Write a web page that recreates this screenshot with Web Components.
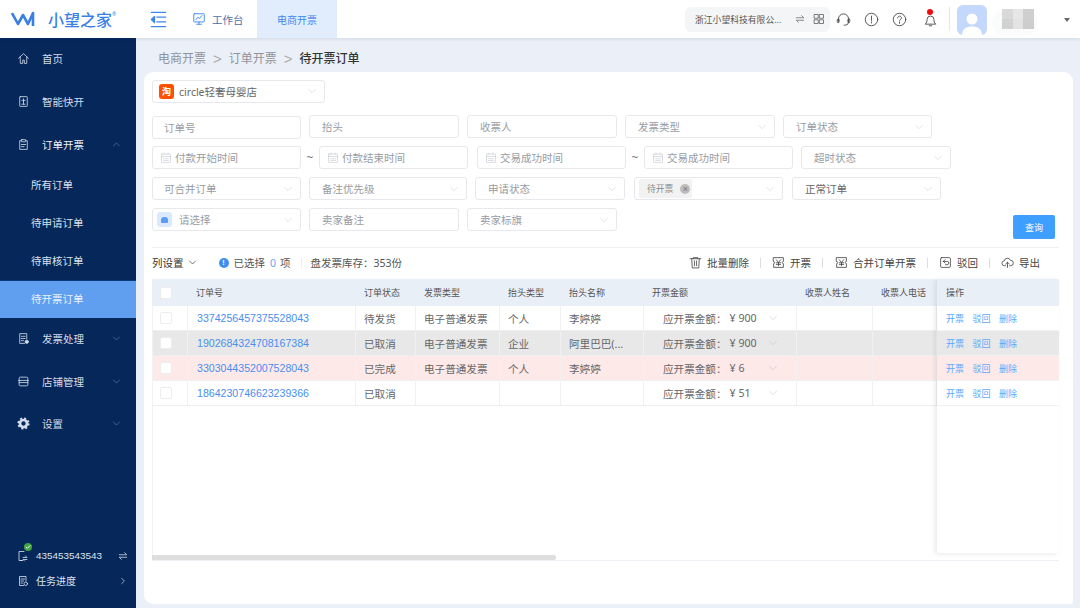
<!DOCTYPE html>
<html lang="zh">
<head>
<meta charset="utf-8">
<title>待开票订单</title>
<style>
  html, body { margin: 0; height: 100%; overflow: hidden; background: #ebeff7; }
  body { font-family: "Noto Sans", "Noto Sans CJK SC", sans-serif; color: #666; }
</style>
</head>
<body>
<app-shell>
  <top-bar slot="top"></top-bar>
  <side-nav slot="side">
    <nav-item icon="home">首页</nav-item>
    <nav-item icon="flash">智能快开</nav-item>
    <nav-item icon="clip" chevron="up" strong>订单开票</nav-item>
    <nav-item sub first>所有订单</nav-item>
    <nav-item sub>待申请订单</nav-item>
    <nav-item sub>待审核订单</nav-item>
    <nav-item sub active>待开票订单</nav-item>
    <nav-item icon="receipt" chevron="down">发票处理</nav-item>
    <nav-item icon="store" chevron="down">店铺管理</nav-item>
    <nav-item icon="gear" chevron="down" style="margin-top:-1px">设置</nav-item>
    <nav-footer slot="footer"></nav-footer>
  </side-nav>
  <bread-crumb slot="main"></bread-crumb>
  <order-page slot="main"></order-page>
</app-shell>

<script>
const ICONS = {
  home: '<path d="M3 11.5 12 3l9 8.5M6 9v12h4.5v-6h3v6H18V9"/>',
  flash: '<rect x="5" y="3" width="14" height="18" rx="1"/><path d="M12 7v6M9 10h6M9 17h6M12 13v4"/>',
  clip: '<path d="M8 5H5v16h14V5h-3"/><rect x="8" y="3" width="8" height="4" rx="1"/><path d="M8 12h8M8 16h5"/>',
  receipt: '<path d="M18 13V3H5v18h9"/><path d="M8 8h7M8 12h7M8 16h4"/><circle cx="18" cy="18" r="3" fill="currentColor"/>',
  store: '<path d="M4 10V6a2 2 0 0 1 2-2h12a2 2 0 0 1 2 2v4M3 10h18M4 10v8a2 2 0 0 0 2 2h12a2 2 0 0 0 2-2v-8M4 14h16"/>',
  gear: '<circle cx="12" cy="12" r="6.5" stroke-width="5"/><circle cx="12" cy="12" r="9.5" stroke-width="3.5" stroke-dasharray="3.7 3.76" stroke-linecap="butt"/>',
  down: '<path d="m4 8 8 8 8-8"/>',
  up: '<path d="m4 16 8-8 8 8"/>',
  right: '<path d="m8 4 8 8-8 8"/>',
  swap: '<path d="M3 9h18l-5-5M21 15H3l5 5"/>',
  grid: '<rect x="3" y="3" width="7.5" height="7.5"/><rect x="13.5" y="3" width="7.5" height="7.5"/><rect x="3" y="13.5" width="7.5" height="7.5"/><rect x="13.5" y="13.5" width="7.5" height="7.5"/>',
  headset: '<path d="M4 15v-4a8 8 0 0 1 16 0v5a5 5 0 0 1-5 5h-2"/><rect x="2" y="11" width="3" height="6" rx="1.5"/><rect x="19" y="11" width="3" height="6" rx="1.5"/>',
  alert: '<circle cx="12" cy="12" r="10"/><path d="M12 6.5v7M12 16v1.5"/>',
  help: '<circle cx="12" cy="12" r="10"/><path d="M9 9.5a3 3 0 1 1 4.5 2.6c-1 .6-1.5 1.2-1.5 2.4M12 16.5V18"/>',
  bell: '<path d="M4 19c2-2 2.5-3.5 2.5-7a5.500 5.500 0 0 1 11 0c0 3.500.5 5 2.500 7ZM10 22h4"/>',
  menu: '<path d="M3 3h18M10 9h11M10 15h11M3 21h18"/><path d="M7 8v8l-4-4Z" fill="currentColor"/>',
  screen: '<rect x="3" y="3" width="18" height="14" rx="1"/><path d="m7 13 3-4 3 2 4-5M12 17v4M8 21h8"/>',
  calendar: '<rect x="3" y="4" width="18" height="17" rx="1"/><path d="M3 9h18M7 13.5h10M7 17h10M8 2v3M16 2v3"/>',
  trash: '<path d="M2 5h20M8 5V3h8v2M5 5l1 17h12l1-17M10 9v9M14 9v9"/>',
  yen: '<path d="M3 3h18v7a2 2 0 0 0 0 4v7H3v-7a2 2 0 0 0 0-4ZM8 7l4 5 4-5M12 12v6M8 12.5h8M8 15.5h8"/>',
  back: '<rect x="3" y="3" width="18" height="18" rx="2"/><path d="M8 10h7a3 3 0 0 1 0 6h-3M8 10l3-3M8 10l3 3"/>',
  cloud: '<path d="M8 18H6.5a4.500 4.500 0 0 1-.5-9 6 6 0 0 1 11.500-1A5 5 0 0 1 18 18h-2M12 21v-9M8.5 15l3.5-3.5 3.5 3.500"/>',
  device: '<path d="M14 3H4v18h6M8 21h3"/><path d="M12 15h8l-3-3M20 19h-8l3 3"/>',
  task: '<path d="M18 12V3H5v18h8"/><path d="M8 8h7M8 12h5M8 16h3"/><circle cx="17.5" cy="17.5" r="3.5"/>'
};

function icon(name, size, weight) {
  return `<svg width="${size}" height="${size}" viewBox="0 0 24 24" fill="none" stroke="currentColor" stroke-width="${weight || 1.6}" stroke-linecap="round" stroke-linejoin="round" style="display:block;flex:none">${ICONS[name]}</svg>`;
}

class AppShell extends HTMLElement {
  constructor() {
    super();
    this.attachShadow({ mode: "open" }).innerHTML = `
      <style>
        :host { display: flex; flex-direction: column; height: 608px; width: 1080px; overflow: hidden; }
        .row { flex: 1; display: flex; min-height: 0; }
        .main { flex: 1; min-width: 0; display: flex; flex-direction: column; padding: 0 7px 4px 8px; }
      </style>
      <slot name="top"></slot>
      <div class="row">
        <slot name="side"></slot>
        <div class="main"><slot name="main"></slot></div>
      </div>`;
  }
}

class TopBar extends HTMLElement {
  constructor() {
    super();
    this.attachShadow({ mode: "open" }).innerHTML = `
      <style>
        :host { display: flex; align-items: center; height: 38px; background: #fff; box-shadow: 0 1px 3px rgba(20,40,90,.12); position: relative; z-index: 2; }
        .logo { display: flex; align-items: center; width: 149px; color: #3b7fe6; flex: none; }
        .logo svg { margin-left: 11px; }
        .logo b { font: 500 16px "Noto Sans CJK SC", sans-serif; margin-left: 13px; }
        .logo sup { font-size: 5px; line-height: 0; margin-top: -10px; }
        .menu { color: #3f86ee; width: 43px; flex: none; }
        .tab { display: flex; align-items: center; height: 38px; font-size: 10.5px; gap: 6px; }
        .work { width: 65px; color: #4a6fa5; flex: none; }
        .work svg { color: #3f86ee; }
        .on { width: 80px; justify-content: center; background: #e1edfd; color: #3f86ee; font-size: 10px; flex: none; }
        .gap { flex: 1; }
        .org { display: flex; align-items: center; width: 145px; height: 25px; box-sizing: border-box; padding-left: 10px; background: #f4f5f6; border-radius: 6px; font-size: 8.8px; color: #555; }
        .org span { width: 100px; white-space: nowrap; }
        .org svg:last-child { margin-left: 8px; }
        .ic { color: #444; display: flex; align-items: center; margin-left: 13px; }
        .bell { position: relative; margin-left: 16px; color: #444; }
        .dot { position: absolute; left: 4px; top: -3px; width: 6px; height: 6px; border-radius: 50%; background: #f00c0c; }
        .div { width: 1px; height: 24px; background: #e6e6e6; margin: 0 7px 0 11px; }
        .avatar { width: 30px; height: 30px; margin-top: 1px; border-radius: 6px; background: #c3d8fc; display: flex; align-items: flex-end; justify-content: center; overflow: hidden; }
        .who { position: relative; width: 59px; height: 20px; margin-left: 15px; display: grid; grid-template-columns: repeat(3, 10.5px); grid-template-rows: repeat(2, 10px); }
        .who::before { content: ""; position: absolute; left: -10px; top: 2px; width: 46px; height: 24px; border-radius: 12px; background: #fafbfb; }
        .who i { display: block; position: relative; }
        .caret { width: 0; height: 0; border: 3px solid transparent; border-top: 4px solid #666; margin: 4px 10px 0 3px; }
      </style>
      <div class="logo">
        <svg width="24" height="16" viewBox="0 0 24 16" fill="none" stroke="currentColor" stroke-width="2.6" stroke-linejoin="round"><path d="M1 2l6 11 5-9 5 9 5-11v13"/></svg>
        <b>小望之家</b><sup>®</sup>
      </div>
      <div class="menu">${icon("menu", 19)}</div>
      <div class="tab work">${icon("screen", 14)}<span>工作台</span></div>
      <div class="tab on">电商开票</div>
      <div class="gap"></div>
      <div class="org"><span>浙江小望科技有限公...</span>${icon("swap", 10)}${icon("grid", 12, 1.5)}</div>
      <div class="ic" style="margin-left:6px">${icon("headset", 15, 1.4)}</div>
      <div class="ic">${icon("alert", 15, 1.4)}</div>
      <div class="ic">${icon("help", 15, 1.4)}</div>
      <div class="bell">${icon("bell", 15, 1.4)}<span class="dot"></span></div>
      <div class="div"></div>
      <div class="avatar"><svg width="24" height="25" viewBox="0 0 24 25" fill="#fff"><circle cx="12" cy="9" r="5.5"/><path d="M2 25c0-6 4.500-8.500 10-8.500S22 19 22 25Z"/></svg></div>
      <div class="who">
        <i style="background:#d9d9d9"></i><i style="background:#e6e6e6"></i><i style="background:#cfcfcf"></i>
        <i style="background:#d2d2d2"></i><i style="background:#e3e3e3"></i><i style="background:#cdcdcd"></i>
      </div>
      <div class="caret"></div>`;
  }
}

class SideNav extends HTMLElement {
  constructor() {
    super();
    this.attachShadow({ mode: "open" }).innerHTML = `
      <style>
        :host { display: flex; flex-direction: column; width: 136px; flex: none; background: #06275a; }
        .list { flex: 1; }
      </style>
      <div class="list"><slot></slot></div>
      <slot name="footer"></slot>`;
  }
}

class NavItem extends HTMLElement {
  constructor() {
    super();
    const sub = this.hasAttribute("sub");
    const name = this.getAttribute("icon");
    const chev = this.getAttribute("chevron");
    this.attachShadow({ mode: "open" }).innerHTML = `
      <style>
        :host { display: flex; align-items: center; box-sizing: border-box; height: 43px; padding: 0 0 2px 17px; font-size: 10.5px; color: #d3dcea; position: relative; }
        :host([sub]) { height: 38px; padding-left: 31px; color: #d9e1ee; }
        :host([first]) { margin-top: -1px; }
        :host([active]) { background: #609ef0; color: #eaf2fe; border-top: 1px solid #0a3a7e; }
        :host([strong]) { color: #eef2f8; }
        .ic { width: 25px; flex: none; color: #d3dcea; }
        .ch { position: absolute; left: 112px; top: 50%; margin-top: -6px; color: #6f86a8; }
      </style>
      ${sub ? "" : `<div class="ic">${icon(name, 13, 1.5)}</div>`}
      <slot></slot>
      ${chev ? `<div class="ch">${icon(chev, 9, 1.6)}</div>` : ""}`;
  }
}

class NavFooter extends HTMLElement {
  constructor() {
    super();
    this.attachShadow({ mode: "open" }).innerHTML = `
      <style>
        :host { display: block; padding-bottom: 15px; color: #dde4ef; }
        .r { display: flex; align-items: center; height: 25px; padding-left: 17px; position: relative; }
        .t { margin-left: 7px; font-size: 10px; }
        .num { font: 9.9px "Liberation Sans", sans-serif; }
        .end { position: absolute; left: 118px; }
        .ok { position: absolute; left: 24px; top: 0; width: 8px; height: 8px; border-radius: 50%; background: #3fa43f; color: #fff; }
      </style>
      <div class="r">${icon("device", 12)}<span class="ok">${icon("check", 8, 3)}</span><span class="t num">435453543543</span><span class="end">${icon("swap", 10, 1.8)}</span></div>
      <div class="r">${icon("task", 12)}<span class="t">任务进度</span><span class="end" style="left:119px">${icon("right", 8, 2)}</span></div>`;
  }
}

class BreadCrumb extends HTMLElement {
  constructor() {
    super();
    this.attachShadow({ mode: "open" }).innerHTML = `
      <style>
        :host { display: flex; align-items: center; box-sizing: border-box; height: 34px; flex: none; padding: 6px 0 0 14px; font-size: 12px; color: #8f949c; }
        i { font-style: normal; margin: 0 7px; font-family: "Liberation Sans", sans-serif; color: #aaa; font-size: 15px; }
        b { font-weight: 500; color: #333; }
      </style>
      <span>电商开票</span><i>&gt;</i><span>订单开票</span><i>&gt;</i><b>待开票订单</b>`;
  }
}

class FilterField extends HTMLElement {
  constructor() {
    super();
    const w = this.getAttribute("w") || 150;
    const isDate = this.hasAttribute("date");
    const isSelect = this.hasAttribute("select");
    this.attachShadow({ mode: "open" }).innerHTML = `
      <style>
        :host { display: flex; align-items: center; box-sizing: border-box; height: 23px; width: ${w}px; flex: none; border: 1px solid #e6e8ec; border-radius: 3px; background: #fff; padding: 0 7px 0 12px; font-size: 10.5px; color: #989ca3; position: relative; white-space: nowrap; }
        :host(:first-child) { padding-left: 11px; }
        :host([date]) { padding-left: 7px; }
        :host([dark]) { color: #666; }
        .cal { color: #c3c8d0; margin-right: 3px; }
        .ch { margin-left: auto; color: #c5c8ce; }
        .tx { flex: 1; min-width: 0; display: flex; align-items: center; }
      </style>
      ${isDate ? `<span class="cal">${icon("calendar", 12, 1.2)}</span>` : ""}
      <span class="tx"><slot></slot></span>
      ${isSelect ? `<span class="ch">${icon("down", 10, 1.2)}</span>` : ""}`;
  }
}

class ToolButton extends HTMLElement {
  constructor() {
    super();
    this.attachShadow({ mode: "open" }).innerHTML = `
      <style>
        :host { display: flex; align-items: center; gap: 5px; font-size: 10.5px; color: #444; white-space: nowrap; }
      </style>
      ${icon(this.getAttribute("icon"), 13, 1.5)}<slot></slot>`;
  }
}

class OrderTable extends HTMLElement {
  constructor() {
    super();
    const cols = ["36px", "168px", "60px", "84px", "61px", "83px", "153px", "76px", "64px"];
    const rows = [
      { no: "3374256457375528043", st: "待发货", type: "电子普通发票", head: "个人", name: "李婷婷", amt: "900" },
      { no: "1902684324708167384", st: "已取消", type: "电子普通发票", head: "企业", name: "阿里巴巴(...", amt: "900", cls: "gray" },
      { no: "3303044352007528043", st: "已完成", type: "电子普通发票", head: "个人", name: "李婷婷", amt: "6", cls: "pink" },
      { no: "1864230746623239366", st: "已取消", type: "", head: "", name: "", amt: "51" }
    ];
    const head = ["订单号", "订单状态", "发票类型", "抬头类型", "抬头名称", "开票金额", "收票人姓名", "收票人电话"];
    const headHtml = `<div class="tr th"><div class="td chk"><i></i></div>${head.map((h) => `<div class="td">${h}</div>`).join("")}</div>`;
    const rowHtml = rows.map((r) => `
      <div class="tr ${r.cls || ""}">
        <div class="td chk"><i></i></div>
        <div class="td no">${r.no}</div>
        <div class="td">${r.st}</div>
        <div class="td">${r.type}</div>
        <div class="td">${r.head}</div>
        <div class="td">${r.name}</div>
        <div class="td amt"><span>应开票金额：</span><span class="v">¥ ${r.amt}</span><span class="c">${icon("down", 10, 1.2)}</span></div>
        <div class="td"></div>
        <div class="td"></div>
      </div>`).join("");
    const opHtml = rows.map((r) => `
      <div class="op ${r.cls || ""}"><a>开票</a><a>驳回</a><a>删除</a></div>`).join("");
    this.attachShadow({ mode: "open" }).innerHTML = `
      <style>
        :host { display: flex; flex-direction: column; height: 281px; flex: none; border-bottom: 1px solid #eeeef4; }
        .body { height: 276px; display: flex; flex: none; border-left: 1px solid #f1f2f5; box-sizing: border-box; }
        .left { width: 784px; flex: none; }
        .tr { display: grid; grid-template-columns: 35px ${cols.slice(1).join(" ")}; height: 25px; border-bottom: 1px solid #eeeff2; box-sizing: border-box; font-size: 10.6px; color: #666; }
        .tr.th { height: 27px; background: #e8eff7; font-size: 9px; color: #555; border: 0; margin-left: -1px; grid-template-columns: 36px ${cols.slice(1).join(" ")}; }
        .td { display: flex; align-items: center; padding-left: 8px; border-right: 1px solid #f0f1f4; white-space: nowrap; overflow: hidden; }
        .th .td { border-right: 0; }
        .gray { background: #e8e8e8; }
        .pink { background: #fee9e9; }
        .gray .td, .pink .td { border-right-color: #f1f1f1; }
        .chk { padding-left: 7px; }
        .th .chk { padding-left: 8px; }
        .chk i { display: block; width: 10px; height: 10px; background: #fff; border: 1px solid #ededed; border-radius: 2px; }
        .no { color: #4a8ef0; font-family: "Liberation Sans", sans-serif; padding-left: 9px; }
        .amt { padding-left: 19px; position: relative; }
        .v { margin-left: 3px; }
        .c { position: absolute; left: 124px; color: #bbb; }
        .right { width: 122px; height: 274px; flex: none; background: #fff; box-shadow: -2px 1px 5px rgba(0,0,0,.09); position: relative; border-bottom-left-radius: 2px; }
        .op-h { height: 27px; background: #e8eff7; display: flex; align-items: center; padding-left: 9px; font-size: 9px; color: #555; }
        .op { height: 25px; display: flex; align-items: center; gap: 8.5px; padding-left: 9px; font-size: 9px; box-sizing: border-box; border-bottom: 1px solid #f1f2f5; }
        .op a { color: #5aa9ff; }
        .track { height: 5px; width: 404px; background: #dedede; border-radius: 0 2px 2px 0; flex: none; }
      </style>
      <div class="body">
        <div class="left">${headHtml}${rowHtml}</div>
        <div class="right"><div class="op-h">操作</div>${opHtml}</div>
      </div>
      <div class="track"></div>`;
  }
}

class OrderPage extends HTMLElement {
  constructor() {
    super();
    this.attachShadow({ mode: "open" }).innerHTML = `
      <style>
        :host { display: block; flex: 1; min-height: 0; background: #fff; border-radius: 9px 9px 2px 9px; padding: 8px 14px 0 8px; box-sizing: border-box; }
        .row { display: flex; align-items: center; gap: 8px; height: 23px; margin-top: 8px; }
        .shop-logo { width: 15px; height: 15px; border-radius: 3px; background: #ff5000; color: #fff; font: 700 9px/15px "Noto Sans CJK SC", sans-serif; text-align: center; margin: 0 5px 0 -5px; flex: none; }
        .shop-name { color: #666; }
        .tilde { width: 10px; text-align: center; margin: 0 -4px; font-size: 12px; color: #777; flex: none; }
        .blue { width: 15px; height: 15px; border-radius: 3px; background: #dbe9fd; margin: 0 7px 0 -7px; flex: none; position: relative; display: flex; align-items: center; justify-content: center; }
        .blue::after { content: ""; width: 7px; height: 6px; background: #5b9df5; border-radius: 3px 3px 1px 1px; }
        .tag { display: flex; align-items: center; height: 19px; width: 53px; margin-left: -8px; padding-left: 8px; box-sizing: border-box; border-radius: 2px; background: #f2f2f2; font-size: 8.8px; color: #888; }
        .x { width: 10px; height: 10px; border-radius: 50%; background: #bdbdbd; color: #777; font: 9px/10px "Liberation Sans", sans-serif; text-align: center; margin-left: 7px; }
        .last { height: 31px; align-items: flex-start; }
        .query { margin: 7px 4px 0 auto; width: 42px; height: 24px; border-radius: 2px; background: #3f9fff; color: #fff; font-size: 9px; display: flex; align-items: center; justify-content: center; }
        hr { border: 0; border-top: 1px solid #eff0f2; margin: 8px 0 0; }
        .bar { display: flex; align-items: center; box-sizing: border-box; height: 31px; padding-bottom: 2px; font-size: 10.5px; color: #555; white-space: nowrap; }
        .dark { color: #333; }
        .chev { margin-left: 4px; color: #333; }
        .info { width: 10px; height: 10px; border-radius: 50%; background: #3f8ff0; color: #fff; font: 700 7px/10px "Liberation Sans", sans-serif; text-align: center; margin: 0 5px 0 22px; }
        .zero { color: #6ea6f0; margin: 0 4px 0 5px; }
        .sep { width: 1px; height: 10px; background: #ddd; flex: none; }
        .tools { margin-left: auto; display: flex; align-items: center; gap: 11px; padding-right: 19px; }
      </style>
      <div class="row" style="margin-top:0">
        <filter-field w="173" select style="padding-bottom:1px"><span class="shop-logo">淘</span><span class="shop-name">circle轻奢母婴店</span></filter-field>
      </div>
      <div class="row" style="margin-top:12px">
        <filter-field w="149" style="align-self:flex-start;margin-top:1px">订单号</filter-field>
        <filter-field>抬头</filter-field>
        <filter-field>收票人</filter-field>
        <filter-field select>发票类型</filter-field>
        <filter-field w="149" select>订单状态</filter-field>
      </div>
      <div class="row">
        <filter-field w="149" date>付款开始时间</filter-field>
        <span class="tilde">~</span>
        <filter-field w="149" date>付款结束时间</filter-field>
        <filter-field w="149" date style="margin-left:1px">交易成功时间</filter-field>
        <span class="tilde">~</span>
        <filter-field w="149" date>交易成功时间</filter-field>
        <filter-field select>超时状态</filter-field>
      </div>
      <div class="row">
        <filter-field w="149" select>可合并订单</filter-field>
        <filter-field w="158" select>备注优先级</filter-field>
        <filter-field select>申请状态</filter-field>
        <filter-field w="149" select style="margin-left:1px"><span class="tag">待开票<span class="x">×</span></span></filter-field>
        <filter-field w="149" select dark style="margin-left:1px">正常订单</filter-field>
      </div>
      <div class="row last">
        <filter-field w="149" select><span class="blue"></span>请选择</filter-field>
        <filter-field>卖家备注</filter-field>
        <filter-field select>卖家标旗</filter-field>
        <div class="query">查询</div>
      </div>
      <hr>
      <div class="bar">
        <span class="dark">列设置</span><span class="chev">${icon("down", 9, 1.8)}</span>
        <span class="info">!</span><span>已选择</span><span class="zero">0</span><span>项</span>
        <span class="sep" style="margin:0 9px 0 10px;background:#eee"></span>
        <span>盘发票库存：353份</span>
        <div class="tools">
          <tool-button icon="trash">批量删除</tool-button><span class="sep"></span>
          <tool-button icon="yen">开票</tool-button><span class="sep" style="margin-right:1px"></span>
          <tool-button icon="yen">合并订单开票</tool-button><span class="sep"></span>
          <tool-button icon="back">驳回</tool-button><span class="sep"></span>
          <tool-button icon="cloud">导出</tool-button>
        </div>
      </div>
      <order-table></order-table>`;
  }
}

ICONS.check = '<path d="m6 12 4 4 8-8"/>';

customElements.define("app-shell", AppShell);
customElements.define("top-bar", TopBar);
customElements.define("side-nav", SideNav);
customElements.define("nav-item", NavItem);
customElements.define("nav-footer", NavFooter);
customElements.define("bread-crumb", BreadCrumb);
customElements.define("filter-field", FilterField);
customElements.define("tool-button", ToolButton);
customElements.define("order-table", OrderTable);
customElements.define("order-page", OrderPage);
</script>
</body>
</html>
